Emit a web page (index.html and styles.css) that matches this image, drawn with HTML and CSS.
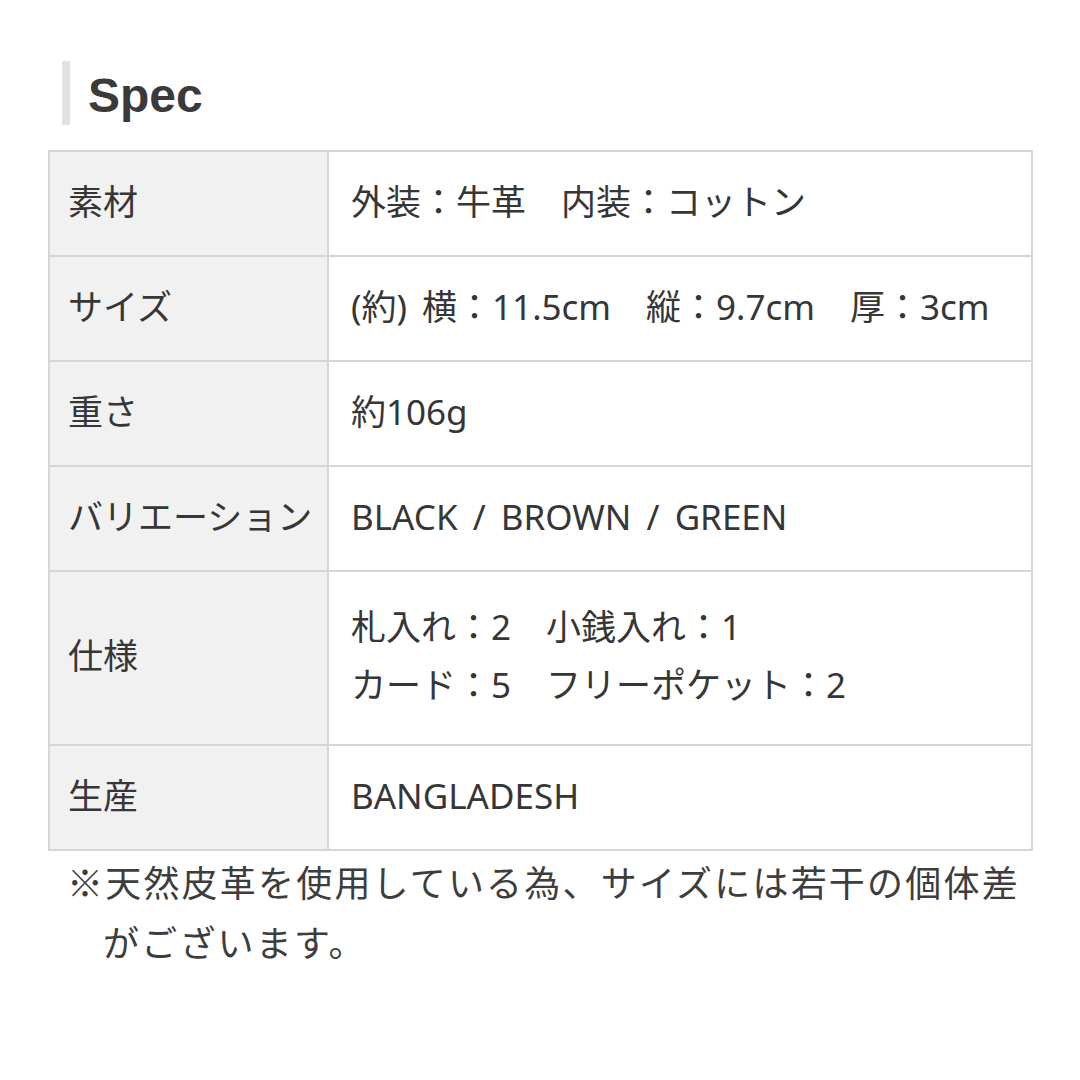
FILE: index.html
```html
<!DOCTYPE html>
<html lang="ja">
<head>
<meta charset="utf-8">
<title>Spec</title>
<link rel="stylesheet" href="styles.css">
</head>
<body>
<section class="spec">
  <h2 class="spec-title">Spec</h2>
  <div class="spec-table">
    <div class="cell label">素材</div>
    <div class="cell value">外装：牛革　内装：コットン</div>
    <div class="cell label">サイズ</div>
    <div class="cell value">(約) 横：11.5cm　縦：9.7cm　厚：3cm</div>
    <div class="cell label">重さ</div>
    <div class="cell value">約106g</div>
    <div class="cell label">バリエーション</div>
    <div class="cell value">BLACK / BROWN / GREEN</div>
    <div class="cell label">仕様</div>
    <div class="cell value multi">札入れ：2　小銭入れ：1<br>カード：5　フリーポケット：2</div>
    <div class="cell label">生産</div>
    <div class="cell value">BANGLADESH</div>
  </div>
  <p class="note">※天然皮革を使用している為、サイズには若干の個体差がございます。</p>
</section>
</body>
</html>
```
FILE: styles.css
```css
html, body {
  margin: 0;
  padding: 0;
  background: #ffffff;
}

.spec {
  padding: 61px 0 0 48px;
  width: 985px;
  font-family: "Noto Sans", "Noto Sans CJK JP", sans-serif;
  color: #333333;
}

.spec-title {
  margin: 0 0 25px 14px;
  height: 58px;
  padding-top: 6px;
  padding-left: 18px;
  border-left: 8px solid #e2e2e2;
  font-family: "Liberation Sans", Arial, sans-serif;
  font-weight: bold;
  font-size: 48px;
  line-height: 58px;
  color: #3a3a3a;
}

.spec-table {
  display: grid;
  grid-template-columns: 279px 1fr;
  border-top: 2px solid #d6d6d6;
  border-left: 2px solid #d6d6d6;
  border-right: 2px solid #d6d6d6;
}

.cell {
  box-sizing: border-box;
  min-height: 105px;
  display: flex;
  align-items: center;
  padding: 8px 20px 12px;
  border-bottom: 2px solid #d6d6d6;
  font-size: 35px;
  line-height: 58px;
  color: #363636;
}

.label {
  background: #f2f1f1;
  border-right: 2px solid #d6d6d6;
  padding-left: 18px;
  white-space: nowrap;
}

.value {
  padding-left: 22px;
  word-spacing: 6px;
}

.multi {
  padding-top: 26px;
  padding-bottom: 30px;
}

.note {
  margin: 0;
  padding: 0 0 0 1em;
  text-indent: -1em;
  margin-left: 19px;
  font-family: "Noto Sans CJK JP", sans-serif;
  font-size: 36px;
  letter-spacing: 2.2px;
  line-height: 60px;
  color: #3d3d3d;
}
```
